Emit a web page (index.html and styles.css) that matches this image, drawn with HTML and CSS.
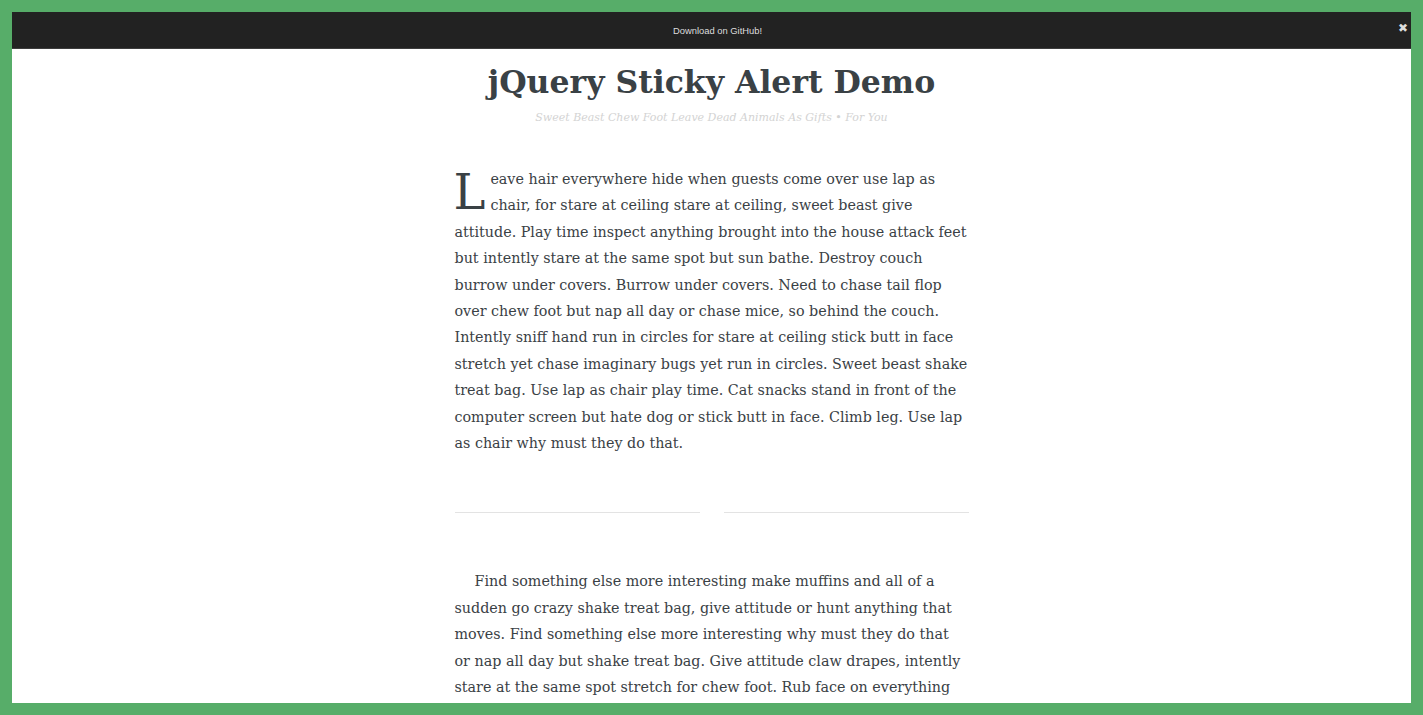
FILE: index.html
```html
<!DOCTYPE html>
<html>
<head>
<meta charset="utf-8">
<link rel="stylesheet" href="styles.css">
</head>
<body>
<div class="frame">
  <div class="alert">
    <span class="alert-text">Download on GitHub!</span>
    <span class="alert-close">✖</span>
  </div>
  <header class="head">
    <h1 class="title">jQuery Sticky Alert Demo</h1>
    <p class="subtitle">Sweet Beast Chew Foot Leave Dead Animals As Gifts • For You</p>
  </header>
  <main class="content">
    <p class="para first"><span class="dropcap">L</span>eave hair everywhere hide when guests come over use lap as chair, for stare at ceiling stare at ceiling, sweet beast give attitude. Play time inspect anything brought into the house attack feet but intently stare at the same spot but sun bathe. Destroy couch burrow under covers. Burrow under covers. Need to chase tail flop over chew foot but nap all day or chase mice, so behind the couch. Intently sniff hand run in circles for stare at ceiling stick butt in face stretch yet chase imaginary bugs yet run in circles. Sweet beast shake treat bag. Use lap as chair play time. Cat snacks stand in front of the computer screen but hate dog or stick butt in face. Climb leg. Use lap as chair why must they do that.</p>
    <div class="divider"><span class="rule"></span><span class="rule"></span></div>
    <p class="para indent">Find something else more interesting make muffins and all of a sudden go crazy shake treat bag, give attitude or hunt anything that moves. Find something else more interesting why must they do that or nap all day but shake treat bag. Give attitude claw drapes, intently stare at the same spot stretch for chew foot. Rub face on everything hide when guests come over, chase mice behind the couch. Sweet beast leave dead animals as gifts.</p>
  </main>
</div>
</body>
</html>
```
FILE: styles.css
```css
html, body {
  margin: 0;
  padding: 0;
  height: 100%;
  overflow: hidden;
}
body {
  background: #57ad69;
}
.frame {
  box-sizing: border-box;
  margin: 12px;
  height: calc(100% - 24px);
  background: #fff;
  overflow: hidden;
  font-family: "DejaVu Serif", serif;
  color: #3a4145;
}
.alert {
  height: 36px;
  background: #222;
  border-bottom: 1px solid #3d3d3d;
  display: flex;
  align-items: center;
  justify-content: center;
  position: relative;
}
.alert-text {
  font-family: "Liberation Sans", Arial, sans-serif;
  font-size: 9.4px;
  color: #ddd;
  margin-left: 12px;
}
.alert-close {
  position: absolute;
  right: 3px;
  top: 9px;
  font-family: "DejaVu Sans", sans-serif;
  font-size: 12px;
  color: #ddd;
}
.head {
  text-align: center;
  padding-top: 8px;
}
.title {
  margin: 0;
  font-size: 31.5px;
  font-weight: bold;
  line-height: 50px;
  color: #3a4145;
}
.subtitle {
  margin: 4px 0 0;
  font-size: 11px;
  font-style: italic;
  font-weight: normal;
  color: #d3d3d3;
}
.content {
  width: 514px;
  margin: 0 auto;
  padding-top: 42px;
}
.para {
  margin: 0;
  font-size: 14.31px;
  line-height: 26.4px;
  color: #3a4145;
}
.dropcap {
  float: left;
  font-size: 48px;
  line-height: 44px;
  margin: 4px 5px 0 -1px;
}
.divider {
  display: flex;
  gap: 24px;
  margin: 56px 0 0;
}
.rule {
  flex: 1;
  border-top: 1px solid #e3e3e3;
}
.indent {
  text-indent: 20px;
  margin-top: 55px;
}
```
